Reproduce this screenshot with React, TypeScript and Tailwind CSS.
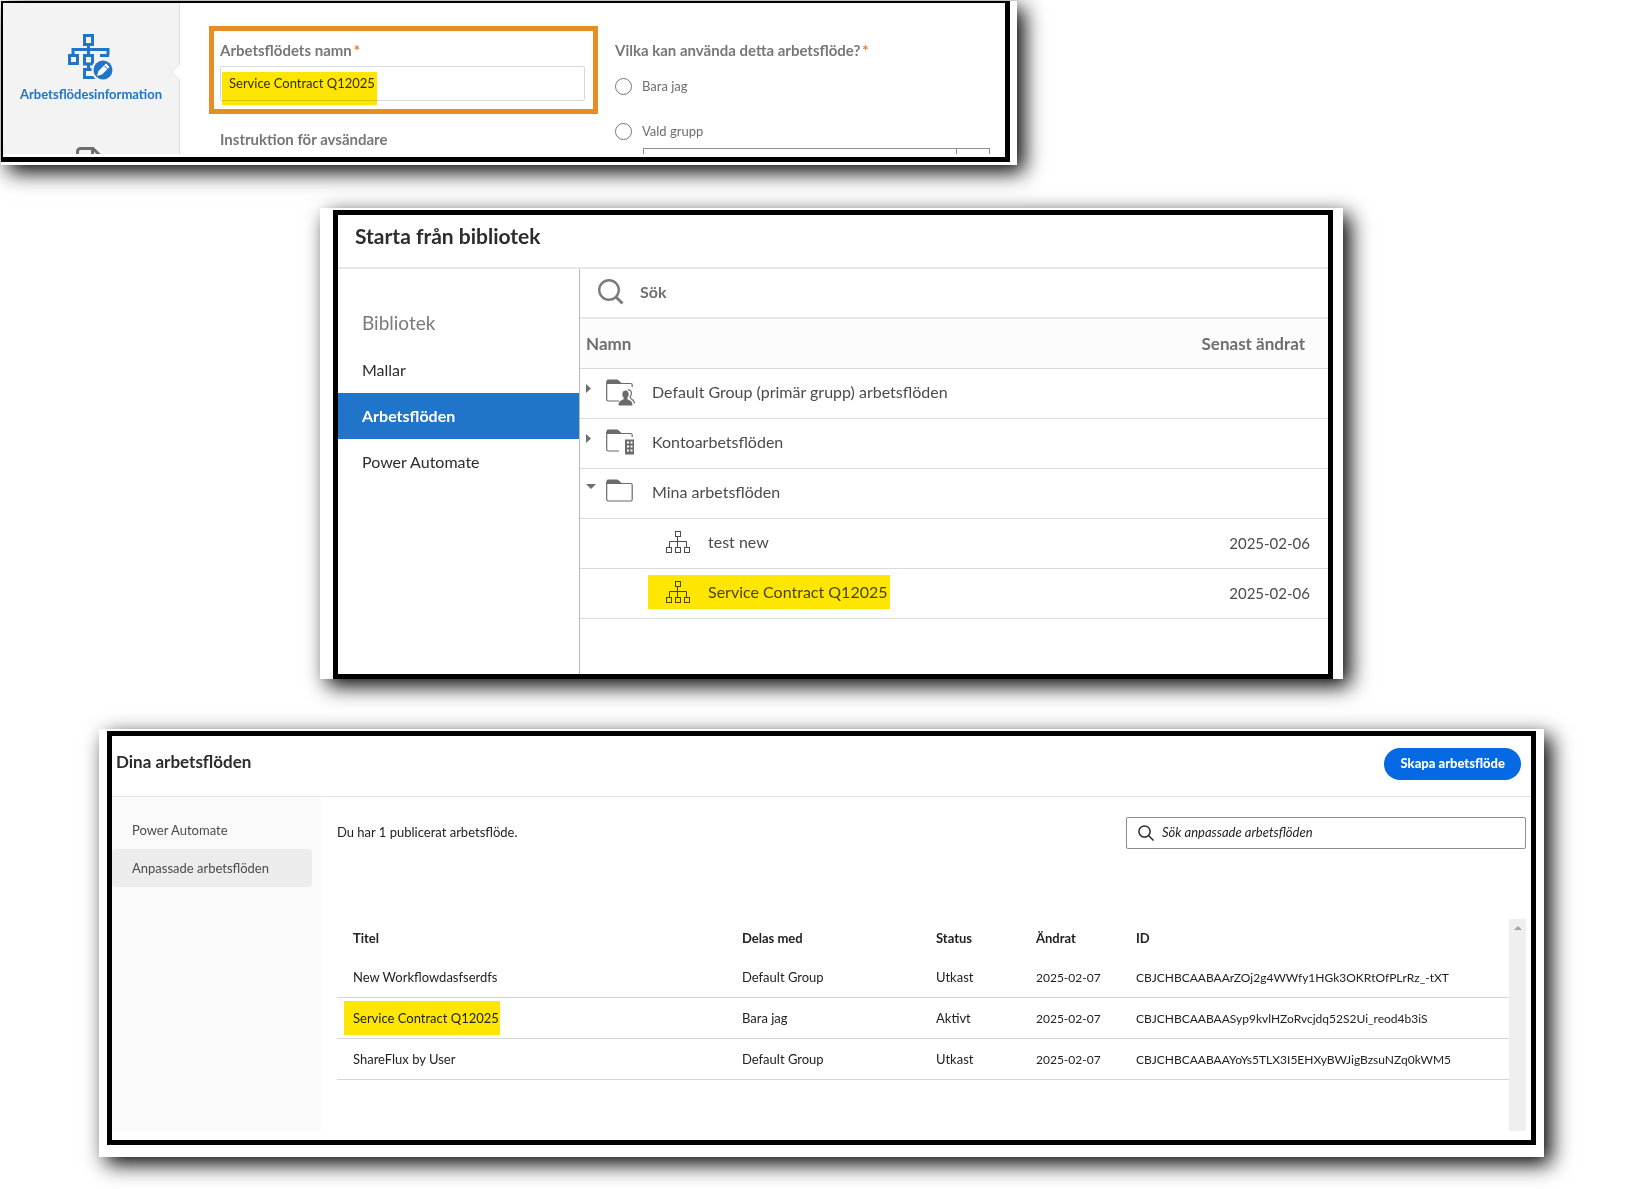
import type { ReactNode } from "react";

type Row = {
  title: string;
  shared: string;
  status: string;
  modified: string;
  id: string;
  marked?: boolean;
};

const rows: Row[] = [
  {
    title: "New Workflowdasfserdfs",
    shared: "Default Group",
    status: "Utkast",
    modified: "2025-02-07",
    id: "CBJCHBCAABAArZOj2g4WWfy1HGk3OKRtOfPLrRz_-tXT",
  },
  {
    title: "Service Contract Q12025",
    shared: "Bara jag",
    status: "Aktivt",
    modified: "2025-02-07",
    id: "CBJCHBCAABAASyp9kvlHZoRvcjdq52S2Ui_reod4b3iS",
    marked: true,
  },
  {
    title: "ShareFlux by User",
    shared: "Default Group",
    status: "Utkast",
    modified: "2025-02-07",
    id: "CBJCHBCAABAAYoYs5TLX3I5EHXyBWJigBzsuNZq0kWM5",
  },
];

function WorkflowEditIcon() {
  return (
    <svg width="46" height="46" viewBox="0 0 46 46" fill="none">
      <g stroke="#2274c9" strokeWidth="3">
        <rect x="16.5" y="1.5" width="8" height="9" />
        <path d="M20.5 11v11M5 21v-5.5h35V21" />
        <rect x="1.5" y="21.5" width="8" height="8" />
        <path d="M16.5 30v-8.5h8V30zM32 21.5h9" />
        <path d="M20.5 30v4M25 35.5h-8.5v8H27" />
      </g>
      <circle cx="35" cy="36" r="11.5" fill="#f3f3f3" />
      <circle cx="35" cy="36" r="9.5" fill="#2274c9" />
      <path d="M29 42l1.5-5 7.5-7.5 3.5 3.5-7.5 7.5z" fill="#fff" />
      <path d="M36 31.5l3.5 3.5" stroke="#2274c9" strokeWidth="1" />
    </svg>
  );
}

function DocumentIcon() {
  return (
    <svg width="26" height="30" viewBox="0 0 26 30" fill="none" stroke="#6e6e6e" strokeWidth="3">
      <path d="M1.5 28V4.5a3 3 0 0 1 3-3H17l7.5 7.5v19z" />
      <path d="M16.5 2v8H24" />
    </svg>
  );
}

function SearchIcon({ large = false }: { large?: boolean }) {
  if (large) {
    return (
      <svg width="26" height="26" viewBox="0 0 26 26" fill="none" stroke="#7b7b7b">
        <circle cx="11" cy="11" r="9.8" strokeWidth="2.4" />
        <path d="M17.5 17.5l7 7" strokeWidth="3" />
      </svg>
    );
  }
  return (
    <svg width="16" height="16" viewBox="0 0 16 16" fill="none" stroke="#2c2c2c" strokeWidth="1.5">
      <circle cx="6.5" cy="6.5" r="5.6" />
      <path d="M10.5 10.5l5 5" />
    </svg>
  );
}

function FolderIcon({ kind }: { kind: "group" | "account" | "plain" }) {
  return (
    <svg width="29" height="27" viewBox="0 0 29 27" fill="none">
      <path d="M.5 5V2A1.5 1.5 0 0 1 2 .5h8.5c1 0 1.5.3 2.2 1L15.5 4z" fill="#6b6b6b" />
      {kind === "plain" ? (
        <path d="M.7 3v17.5q0 1.5 1.5 1.5h22.5q1.500 0 1.5-1.5V6q0-1.5-1.5-1.5H1" stroke="#6b6b6b" strokeWidth="1.2" />
      ) : (
        <path d="M.7 3v17.5q0 1.5 1.5 1.5H13M1 4.5h23.7q1.5 0 1.5 1.5v2" stroke="#6b6b6b" strokeWidth="1.2" />
      )}
      {kind === "group" && (
        <g fill="#6b6b6b">
          <path d="M19.5 11.5c2 0 3.2 1.5 3.2 3.7 0 1.5-.6 2.700-1.3 3.5-.3 1.3.2 1.7 1.3 2.2 2.3.9 3.8 1.6 3.8 5.6h-14c0-4 1.5-4.7 3.8-5.6 1.1-.5 1.6-.9 1.3-2.2-.7-.8-1.3-2-1.3-3.5 0-2.2 1.2-3.7 3.2-3.7z" />
          <path d="M22 10.8c2-.2 3.5 1.2 3.4 3.5 0 1.7-.5 2.6-1.2 3.4-.2 1.2.4 1.7 1.3 2.2 1.7.9 3 1.6 3 4.6" stroke="#6b6b6b" strokeWidth="1.2" fill="none" />
        </g>
      )}
      {kind === "account" && (
        <g>
          <path d="M19 10.5h9v15h-9z" fill="#6b6b6b" />
          <path d="M21 12.5h2v2h-2zM24.5 12.5h2v2h-2zM21 16.5h2v2h-2zM24.5 16.5h2v2h-2zM21 20.5h2v2h-2zM24.5 20.5h2v2h-2z" fill="#fff" />
        </g>
      )}
    </svg>
  );
}

function WorkflowIcon() {
  return (
    <svg className="shrink-0" width="24" height="22" viewBox="0 0 24 22" fill="none" stroke="currentColor">
      <rect x="9.5" y=".5" width="5" height="5" />
      <path d="M11.5 6v10M3.5 16v-5.5h17V16" />
      <rect x=".5" y="16.5" width="5" height="5" />
      <rect x="9.5" y="16.5" width="5" height="5" />
      <rect x="18.5" y="16.5" width="5" height="5" />
    </svg>
  );
}

function FolderRow({ kind, open = false, children }: { kind: "group" | "account" | "plain"; open?: boolean; children: ReactNode }) {
  return (
    <tr className="h-[50px] border-b border-[#dadada]">
      <td colSpan={2} className="pb-0.5">
        <button type="button" className="flex w-full items-center pl-1.5 text-left">
          <span className="flex h-4 w-5 items-start">
            <svg width="10" height="10" viewBox="0 0 10 10" fill="#6e6e6e">
              {open ? <path d="M0 0h10L5 5z" /> : <path d="M0 0l5 4.5L0 9z" />}
            </svg>
          </span>
          <FolderIcon kind={kind} />
          <span className="ml-[17px]">{children}</span>
        </button>
      </td>
    </tr>
  );
}

function InformationPanel() {
  return (
    <section className="ml-px w-full max-w-[1016px] bg-white pr-[7px] pb-[3px] shadow-[7px_7px_20px_#000]">
      <div className="h-[161px] overflow-hidden border-t-2 border-r-5 border-b-5 border-l-2 border-black pb-[3px]">
        <div className="flex h-full overflow-hidden text-[#6e6e6e]">
          <nav className="relative flex w-[177px] shrink-0 flex-col items-center border-r border-[#dcdcdc] bg-[#f3f3f3] pt-[31px]">
            <a href="#info" className="flex flex-col items-center text-[13px] leading-5 font-bold text-[#2274c9]">
              <WorkflowEditIcon />
              <span className="mt-1">Arbetsflödesinformation</span>
            </a>
            <a href="#documents" aria-label="Dokument" className="mt-[43px] mr-1">
              <DocumentIcon />
            </a>
            <svg className="absolute top-[60px] -right-px" width="9" height="18" viewBox="0 0 9 18">
              <path d="M9 0L1 9l8 9z" fill="#fff" />
              <path d="M8.5 1L1 9l7.5 8" fill="none" stroke="#e4e4e4" />
            </svg>
          </nav>

          <div className="flex flex-1 pt-[23px] pl-[29px]">
            <div className="w-[389px] shrink-0">
              <div className="h-[88px] border-5 border-[#e88d24] px-1.5 pt-[7px]">
                <label htmlFor="workflow-name" className="block text-[15px] leading-6 font-bold text-[#777]">
                  Arbetsflödets namn<span className="ml-0.5 text-[#f0762b]">*</span>
                </label>
                <div className="relative mt-1 w-[365px]">
                  <input
                    id="workflow-name"
                    type="text"
                    defaultValue="Service Contract Q12025"
                    className="block h-[35px] w-full rounded-xs border border-[#d5dae0] px-2 pb-0.5 text-[13px] text-[#333] outline-none"
                  />
                  <span className="pointer-events-none absolute top-[6px] left-[2px] h-[33px] w-[155px] bg-[#ffe600] mix-blend-multiply" />
                </div>
              </div>
              <p className="mt-[13px] pl-[11px] text-[15px] leading-6 font-bold text-[#777]">Instruktion för avsändare</p>
            </div>

            <fieldset className="pt-3 pl-[17px]">
              <legend className="float-left w-full text-[15px] leading-6 font-bold text-[#777]">
                Vilka kan använda detta arbetsflöde?<span className="ml-0.5 text-[#f0762b]">*</span>
              </legend>
              <label className="clear-both flex items-center gap-2.5 pt-3 text-[13px] leading-6">
                <input type="radio" name="access" className="size-[17px] appearance-none rounded-full border border-[#767676]" />
                Bara jag
              </label>
              <label className="mt-[21px] flex items-center gap-2.5 text-[13px] leading-6">
                <input type="radio" name="access" className="size-[17px] appearance-none rounded-full border border-[#767676]" />
                Vald grupp
              </label>
              <div className="mt-[5px] ml-7 flex h-9 w-[347px] border border-[#8e8e8e]">
                <select aria-label="Grupp" className="flex-1 appearance-none border-r border-[#8e8e8e]" />
                <span className="w-8" />
              </div>
            </fieldset>
          </div>
        </div>
      </div>
    </section>
  );
}

function LibraryPanel() {
  return (
    <section className="mt-[43px] ml-80 w-full max-w-[1023px] bg-white pt-0.5 pr-2.5 pl-[13px] shadow-[7px_7px_20px_#000]">
      <div className="border-5 border-black">
        <h2 className="border-b-2 border-[#e8e8e8] px-[17px] pt-[5px] pb-[15px] text-[21px] leading-8 font-bold text-[#2c2c2c]">
          Starta från bibliotek
        </h2>
        <div className="flex">
          <nav className="w-[242px] shrink-0 border-r border-[#b8b8b8] pt-[38px] text-[16px] text-[#2c2c2c]">
            <h3 className="mb-2 px-6 text-[19px] leading-8 text-[#7a7a7a]">Bibliotek</h3>
            <a href="#templates" className="block px-6 leading-[46px]">Mallar</a>
            <a href="#workflows" className="block bg-[#2074c9] px-6 leading-[46px] font-bold text-white">Arbetsflöden</a>
            <a href="#automate" className="block px-6 leading-[46px]">Power Automate</a>
          </nav>

          <div className="flex-1 pb-[55px]">
            <div className="flex h-[50px] items-center border-b-2 border-[#e8e8e8] pb-0.5 pl-[18px]">
              <SearchIcon large />
              <input
                type="search"
                aria-label="Sök"
                placeholder="Sök"
                className="ml-4 flex-1 text-[16px] font-bold outline-none placeholder:text-[#707070]"
              />
            </div>
            <table className="w-full border-collapse text-[16px] text-[#4b4b4b]">
              <thead>
                <tr className="h-[49px] border-b border-[#dadada] bg-[#fcfcfc] text-[17px] text-[#6e6e6e]">
                  <th className="pl-1.5 text-left font-bold">Namn</th>
                  <th className="pr-[23px] text-right font-bold">Senast ändrat</th>
                </tr>
              </thead>
              <tbody>
                <FolderRow kind="group">Default Group (primär grupp) arbetsflöden</FolderRow>
                <FolderRow kind="account">Kontoarbetsflöden</FolderRow>
                <FolderRow kind="plain" open>Mina arbetsflöden</FolderRow>
                <tr className="h-[50px] border-b border-[#dadada]">
                  <td className="pb-[3px] pl-[68px]">
                    <a href="#test-new" className="flex items-center px-[18px]">
                      <WorkflowIcon />
                      <span className="ml-[18px]">test new</span>
                    </a>
                  </td>
                  <td className="pr-[18px] text-right text-[15px]">2025-02-06</td>
                </tr>
                <tr className="h-[50px] border-b border-[#dadada]">
                  <td className="pb-[3px] pl-[68px]">
                    <a href="#service-contract" className="flex h-[34px] w-[242px] items-center bg-[#ffe600] px-[18px] whitespace-nowrap text-[#4b4400]">
                      <WorkflowIcon />
                      <span className="ml-[18px]">Service Contract Q12025</span>
                    </a>
                  </td>
                  <td className="pr-[18px] text-right text-[15px]">2025-02-06</td>
                </tr>
              </tbody>
            </table>
          </div>
        </div>
      </div>
    </section>
  );
}

function WorkflowsPanel() {
  return (
    <section className="mt-[50px] mr-[97px] ml-[99px] bg-white pt-0.5 pr-2 pb-3 pl-2 shadow-[7px_7px_20px_#000]">
      <div className="border-5 border-black pb-[9px] text-[13px] text-[#222]">
        <header className="flex items-start justify-between border-b border-[#e6e6e6] pt-3 pr-2.5 pb-4 pl-1">
          <h2 className="text-[17px] leading-7 font-bold text-[#2c2c2c]">Dina arbetsflöden</h2>
          <button type="button" className="h-8 rounded-full bg-[#0469e3] px-4 text-[13px] font-black text-white">
            Skapa arbetsflöde
          </button>
        </header>
        <div className="flex">
          <nav className="w-[209px] shrink-0 bg-[#fafafa] pt-[14px] pr-[9px] text-[#4b4b4b]">
            <a href="#power-automate" className="block pl-5 leading-[38px]">Power Automate</a>
            <a href="#custom" className="block rounded-sm bg-[#ececec] pl-5 leading-[38px]">Anpassade arbetsflöden</a>
          </nav>
          <main className="min-w-0 flex-1 pt-5 pr-[5px] pl-4">
            <div className="flex items-center justify-between">
              <p>Du har 1 publicerat arbetsflöde.</p>
              <label className="flex h-8 w-[400px] items-center rounded-xs border border-[#8e8e8e] pl-[11px]">
                <SearchIcon />
                <input
                  type="search"
                  aria-label="Sök anpassade arbetsflöden"
                  placeholder="Sök anpassade arbetsflöden"
                  className="ml-2 flex-1 italic outline-none placeholder:text-[#222]"
                />
              </label>
            </div>
            <div className="mt-[70px] flex">
              <div className="flex-1 pb-[51px]">
                <table className="w-full table-fixed border-collapse">
                  <colgroup>
                    <col />
                    <col className="w-[194px]" />
                    <col className="w-[100px]" />
                    <col className="w-[100px]" />
                    <col className="w-[389px]" />
                  </colgroup>
                  <thead>
                    <tr className="h-[38px] text-left">
                      <th className="pt-0.5 pl-4 font-bold">Titel</th>
                      <th className="pt-0.5 pl-4 font-bold">Delas med</th>
                      <th className="pt-0.5 pl-4 font-bold">Status</th>
                      <th className="pt-0.5 pl-4 font-bold">Ändrat</th>
                      <th className="pt-0.5 pl-4 font-bold">ID</th>
                    </tr>
                  </thead>
                  <tbody>
                    {rows.map((row) => (
                      <tr key={row.id} className="h-[41px] border-b border-[#d5d5d5]">
                        {row.marked ? (
                          <td className="pl-[7px]">
                            <span className="flex h-[34px] w-[156px] items-center bg-[#ffe600] pt-0.5 pl-[9px] whitespace-nowrap">{row.title}</span>
                          </td>
                        ) : (
                          <td className="pt-0.5 pl-4">{row.title}</td>
                        )}
                        <td className="pt-0.5 pl-4">{row.shared}</td>
                        <td className="pt-0.5 pl-4">{row.status}</td>
                        <td className="pt-0.5 pl-4 text-[12px]">{row.modified}</td>
                        <td className="pt-0.5 pl-4 text-[12px]">{row.id}</td>
                      </tr>
                    ))}
                  </tbody>
                </table>
              </div>
              <div className="flex w-[17px] justify-center bg-[#efefef] pt-[7px]">
                <svg width="8" height="4" viewBox="0 0 8 4" fill="#a3a3a3">
                  <path d="M4 0l4 4H0z" />
                </svg>
              </div>
            </div>
          </main>
        </div>
      </div>
    </section>
  );
}

export default function App() {
  return (
    <div className="flow-root min-h-screen overflow-x-hidden bg-white pt-px pb-8 font-[Lato,'Open_Sans',sans-serif]">
      <InformationPanel />
      <LibraryPanel />
      <WorkflowsPanel />
    </div>
  );
}
